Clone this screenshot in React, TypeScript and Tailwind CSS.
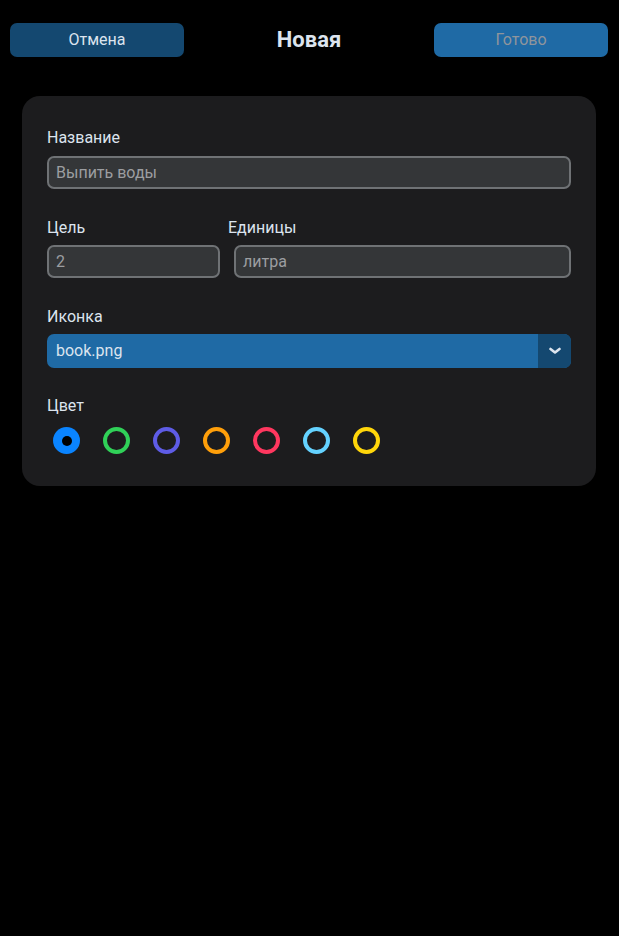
import React from "react";

const colors = ["#0a84ff", "#30d158", "#5e5ce6", "#ff9f0a", "#ff375f", "#64d2ff", "#ffd60a"];

function Label({ children, className = "" }: { children: React.ReactNode; className?: string }) {
  return <div className={"text-[16px] leading-[19px] text-[#dce4ee] " + className}>{children}</div>;
}

function Field({ value, className = "" }: { value: string; className?: string }) {
  return (
    <div
      className={
        "h-[33px] flex items-center px-[7px] rounded-[7px] border-2 border-[#6f7275] bg-[#343638] text-[16px] text-[#9c9ea1] " +
        className
      }
    >
      {value}
    </div>
  );
}

export default function App() {
  const selected = 0;

  return (
    <div className="w-[619px] h-[936px] bg-black" style={{ fontFamily: "Roboto, 'Liberation Sans', sans-serif" }}>
      {/* Header */}
      <div className="flex items-center justify-between pl-[10px] pr-[11px] pt-[23px]">
        <button className="w-[174px] h-[34px] rounded-[7px] bg-[#144870] text-[16px] text-[#dce4ee]">Отмена</button>
        <div className="text-[22px] leading-[34px] font-bold text-[#dce4ee]">Новая</div>
        <button className="w-[174px] h-[34px] rounded-[7px] bg-[#1f6aa5] text-[16px] text-[#8f959c]">Готово</button>
      </div>

      {/* Form card */}
      <div className="ml-[22px] mr-[23px] mt-[39px] rounded-[18px] bg-[#1c1c1e] px-[25px] pt-[32px] pb-[32px]">
        <Label className="mb-[9px]">Название</Label>
        <Field value="Выпить воды" />

        <div className="mt-[29px] flex">
          <div className="w-[173px]">
            <Label className="mb-[8px]">Цель</Label>
            <Field value="2" />
          </div>
          <div className="flex-1 ml-[8px]">
            <Label className="mb-[8px]">Единицы</Label>
            <Field value="литра" className="ml-[6px]" />
          </div>
        </div>

        <Label className="mt-[29px] mb-[8px]">Иконка</Label>
        <div className="h-[34px] flex rounded-[7px] overflow-hidden bg-[#1f6aa5]">
          <div className="flex-1 flex items-center px-[9px] text-[16px] text-[#dce4ee]">book.png</div>
          <div className="w-[33px] flex items-center justify-center bg-[#144870]">
            <svg width="12" height="8" viewBox="0 0 12 8">
              <path d="M1.5 2 L6 5.5 L10.5 2" fill="none" stroke="#dce4ee" strokeWidth="2.6" strokeLinecap="round" strokeLinejoin="round" />
            </svg>
          </div>
        </div>

        <Label className="mt-[28px]">Цвет</Label>
        <div className="mt-[12px] flex gap-[23px] pl-[6px]">
          {colors.map((c, i) =>
            i === selected ? (
              <div key={c} className="w-[27px] h-[27px] rounded-full flex items-center justify-center" style={{ backgroundColor: c }}>
                <div className="w-[10px] h-[10px] rounded-full bg-[#000]" />
              </div>
            ) : (
              <div key={c} className="w-[27px] h-[27px] rounded-full border-[4px]" style={{ borderColor: c }} />
            )
          )}
        </div>
      </div>
    </div>
  );
}
